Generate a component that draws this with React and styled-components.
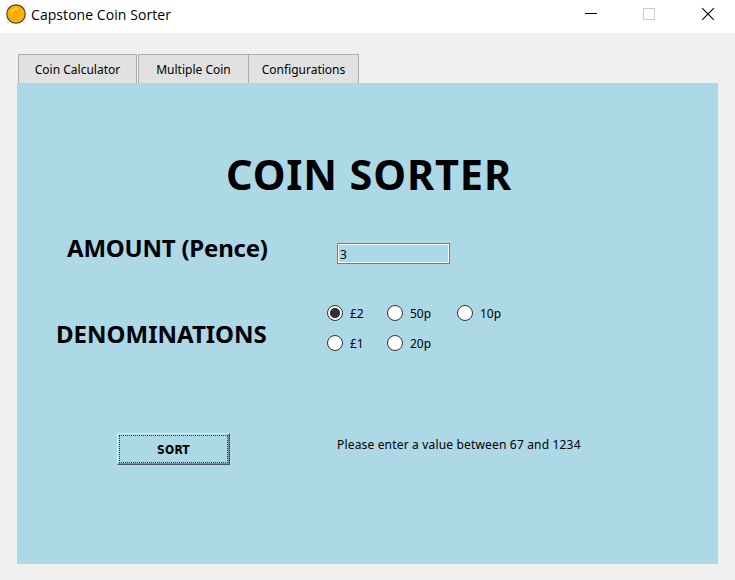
import React from "react";
import styled, { createGlobalStyle } from "styled-components";

const GlobalStyle = createGlobalStyle`
  * { box-sizing: border-box; }
  html, body { margin: 0; padding: 0; overflow: hidden; }
`;

const Window = styled.div`
  display: flex;
  flex-direction: column;
  width: 735px;
  height: 580px;
  background: #f0f0f0;
  color: #000;
  font: 12px "Noto Sans", sans-serif;
`;

const TitleBar = styled.header`
  display: flex;
  align-items: flex-start;
  height: 33px;
  flex: none;
  padding-left: 6px;
  background: #fff;
`;

const CoinIcon = styled.svg`
  width: 20px;
  height: 20px;
  margin-top: 4px;
`;

const WindowTitle = styled.span`
  flex: 1;
  margin-left: 5px;
  font: 14px/20px "Open Sans", sans-serif;
  letter-spacing: 0.06px;
  padding-top: 5px;
`;

const WindowControls = styled.svg`
  width: 175px;
  height: 33px;
  flex: none;
`;

const Tabs = styled.nav`
  display: flex;
  height: 29px;
  flex: none;
  margin: 21px 0 0 18px;
`;

const Tab = styled.button`
  width: ${(p) => p.$width}px;
  margin: 0 ${(p) => (p.$gap ? 1 : 0)}px 0 0;
  padding: 1px 0 0;
  border: 1px solid #adadad;
  border-bottom: 0;
  border-right-width: ${(p) => (p.$joined ? 0 : 1)}px;
  background: #e1e1e1;
  color: inherit;
  font: inherit;
`;

const Panel = styled.main`
  display: flex;
  flex-direction: column;
  width: 701px;
  height: 481px;
  flex: none;
  margin-left: 17px;
  background: #add8e6;
`;

const Heading = styled.h1`
  margin: 66px 0 0 209px;
  font: bold 41.5px/50px "Noto Sans", sans-serif;
  letter-spacing: 0.85px;
  white-space: nowrap;
`;

const Row = styled.div`
  display: grid;
  grid-template-columns: 320px auto;
  align-items: start;
  height: ${(p) => p.$height}px;
  margin-top: ${(p) => p.$top}px;
`;

const Label = styled.h2`
  margin: ${(p) => p.$drop}px 0 0 ${(p) => p.$indent}px;
  font: bold 24px/30px "Noto Sans", sans-serif;
  letter-spacing: ${(p) => p.$tracking || 0}px;
  white-space: nowrap;
`;

const AmountInput = styled.input`
  width: 113px;
  height: 21px;
  padding: 2px 0 0 2px;
  border: 1px solid #7a7a7a;
  border-radius: 0;
  outline: none;
  box-shadow: inset 0 0 0 1px #fff;
  background: #add8e6;
  color: #000;
  font: inherit;
`;

const RadioGrid = styled.div`
  display: grid;
  grid-template-columns: 60px 70px 60px;
  grid-auto-rows: 16px;
  row-gap: 14px;
  margin-left: -10px;
`;

const RadioLabel = styled.label`
  display: flex;
  align-items: center;
  gap: 7px;
  line-height: 16px;
  white-space: nowrap;
`;

const RadioText = styled.span`
  padding-top: 1px;
`;

const Radio = styled.input`
  appearance: none;
  flex: none;
  width: 16px;
  height: 16px;
  margin: 0;
  border: 1px solid #333;
  border-radius: 50%;
  background: #fff;
  &:checked {
    background: radial-gradient(circle, #333 4.7px, #fff 5.4px);
  }
`;

const SortButton = styled.button`
  width: 113px;
  height: 32px;
  margin-left: 100px;
  padding: 1px;
  border: 1px solid;
  border-color: #c8f5ff #45565c #45565c #c8f5ff;
  box-shadow: inset -1px -1px 0 #79979f;
  background: #add8e6;
  color: #000;
  font: bold 12px "DejaVu Sans Condensed", sans-serif;
  letter-spacing: 0.2px;
`;

const FocusRing = styled.span`
  display: flex;
  align-items: center;
  justify-content: center;
  height: 28px;
  padding-top: 2px;
  border: 1px dotted #52271a;
`;

const Message = styled.p`
  margin: 4px 0 0;
  line-height: 16px;
  letter-spacing: 0.17px;
  white-space: nowrap;
`;

const denominations = ["£2", "50p", "10p", "£1", "20p"];

export default function App() {
  return (
    <Window>
      <GlobalStyle />
      <TitleBar>
        <CoinIcon viewBox="0 0 20 20">
          <defs>
            <linearGradient id="gold" x1="0" y1="0" x2="1" y2="1">
              <stop offset="0" stopColor="#ffb900" />
              <stop offset="0.5" stopColor="#ffa90a" />
              <stop offset="1" stopColor="#ffc800" />
            </linearGradient>
          </defs>
          <rect width="20" height="20" fill="#f1f1f1" />
          <circle cx="10" cy="10" r="9.2" fill="#ffc400" stroke="#50452f" strokeWidth="1.2" />
          <circle cx="10" cy="10" r="7.2" fill="url(#gold)" stroke="#f9a50b" strokeWidth="0.7" />
          <path d="M5 8Q8 4 12 5" fill="none" stroke="#ffdc35" strokeWidth="1.3" />
          <path d="M8 8h3l1 2-2 3" fill="none" stroke="#f5a000" strokeWidth="0.8" />
        </CoinIcon>
        <WindowTitle>Capstone Coin Sorter</WindowTitle>
        <WindowControls viewBox="0 0 175 33" fill="none">
          <path d="M25 13.5H37" stroke="#000" />
          <rect x="83.5" y="8.5" width="11" height="11" stroke="#ccc" />
          <path d="M142.2 8.2L153.8 19.8M153.8 8.2L142.2 19.8" stroke="#000" strokeWidth="1.1" />
        </WindowControls>
      </TitleBar>
      <Tabs>
        <Tab $width={119} $gap>Coin Calculator</Tab>
        <Tab $width={110} $joined>Multiple Coin</Tab>
        <Tab $width={111}>Configurations</Tab>
      </Tabs>
      <Panel>
        <Heading>COIN SORTER</Heading>
        <Row $top={44} $height={21}>
          <Label $indent={50} $drop={-10} $tracking={-0.22}>AMOUNT (Pence)</Label>
          <AmountInput defaultValue="3" />
        </Row>
        <Row $top={41} $height={46}>
          <Label $indent={39} $drop={14}>DENOMINATIONS</Label>
          <RadioGrid>
            {denominations.map((name, i) => (
              <RadioLabel key={name}>
                <Radio type="radio" name="denomination" defaultChecked={i === 0} />
                <RadioText>{name}</RadioText>
              </RadioLabel>
            ))}
          </RadioGrid>
        </Row>
        <Row $top={82} $height={32}>
          <SortButton>
            <FocusRing>SORT</FocusRing>
          </SortButton>
          <Message>Please enter a value between 67 and 1234</Message>
        </Row>
      </Panel>
    </Window>
  );
}
